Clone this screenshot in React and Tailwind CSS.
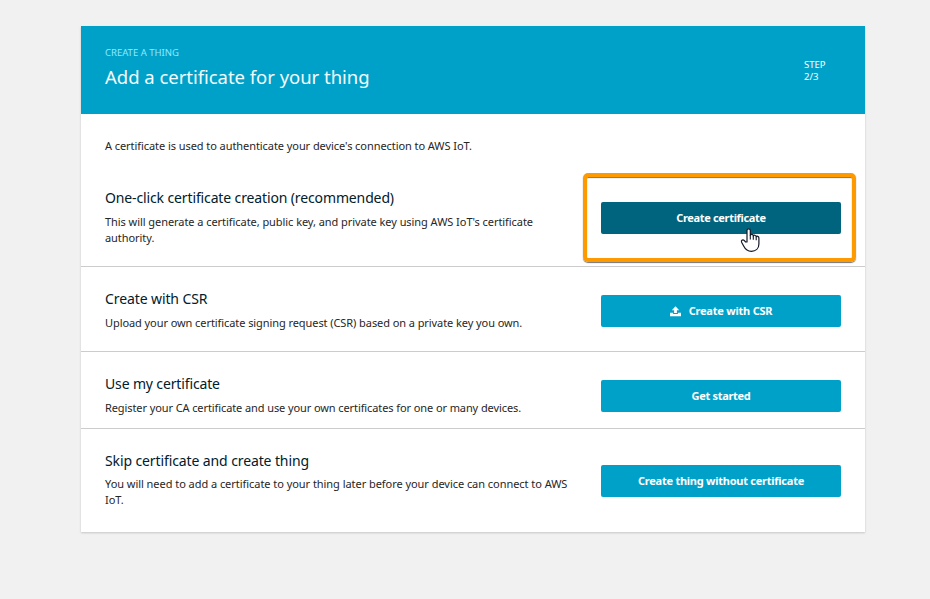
const uploadIcon = (
  <svg className="mr-2 h-[11px] w-[11px] shrink-0" viewBox="0 0 11 11" fill="#fff">
    <path d="M5.5 .3 9.2 4.2H6.9V7H4.1V4.2H1.8Z" />
    <path d="M0 6.8h3.1V8h4.8V6.8H11V10.2H0Z" />
  </svg>
);

const options = [
  {
    title: 'One-click certificate creation (recommended)',
    lines: [
      "This will generate a certificate, public key, and private key using AWS IoT's certificate",
      'authority.',
    ],
    action: 'Create certificate',
    row: 'h-[101px] border-b border-[#ccc]',
    heading: 'tracking-[-0.13px]',
    lead: 'mt-1.5 tracking-[-0.057px]',
    button: 'mt-9 bg-[#00647e] tracking-[-0.33px]',
    highlighted: true,
  },
  {
    title: 'Create with CSR',
    lines: ['Upload your own certificate signing request (CSR) based on a private key you own.'],
    action: 'Create with CSR',
    row: 'h-[85px] border-b border-[#ccc]',
    heading: 'tracking-[-0.1px]',
    lead: 'mt-1.5 tracking-[-0.075px]',
    button: 'mt-7 bg-[#00a1c9] tracking-[-0.22px]',
    icon: uploadIcon,
  },
  {
    title: 'Use my certificate',
    lines: ['Register your CA certificate and use your own certificates for one or many devices.'],
    action: 'Get started',
    row: 'h-[77px] border-b border-[#ccc]',
    heading: 'tracking-[-0.14px]',
    lead: 'mt-1.5 tracking-[-0.095px]',
    button: 'mt-7 bg-[#00a1c9] tracking-[-0.3px]',
  },
  {
    title: 'Skip certificate and create thing',
    lines: [
      'You will need to add a certificate to your thing later before your device can connect to AWS',
      'IoT.',
    ],
    action: 'Create thing without certificate',
    row: 'h-[103px]',
    heading: 'tracking-[-0.11px]',
    lead: 'mt-[5px] tracking-[-0.045px]',
    button: 'mt-9 bg-[#00a1c9] tracking-[-0.25px]',
  },
];

function Cursor() {
  return (
    <svg className="absolute left-[139px] top-[25px] h-[26px] w-5" viewBox="0 0 20 26">
      <path
        d="M7 15V3.6C7 1.2 10.3 1.2 10.3 3.6V8.2C10.8 7 13.3 7.2 13.3 8.9C13.8 7.8 16.2 8 16.2 9.7C16.8 8.8 18.9 9.2 18.9 11V17C18.9 21.6 15.6 24.3 11.4 24.3C7.4 24.3 5.2 22 3.8 19.2L1.6 15.2C.7 13.2 3 12.2 4.4 13.6L5.6 15Z"
        fill="#fff"
        stroke="#111827"
        strokeWidth="1.2"
        strokeLinejoin="round"
      />
      <path d="M10.3 8v4.6M13.3 8.8v4M16.2 9.6v3.6" stroke="#111827" strokeWidth="1.1" fill="none" />
    </svg>
  );
}

function Option({ option }) {
  return (
    <section className={`flex justify-between px-6 ${option.row}`}>
      <div className="pt-[22px]">
        <h2 className={`whitespace-nowrap text-[14px] leading-5 text-[#00202b] ${option.heading}`}>
          {option.title}
        </h2>
        <div className={`whitespace-nowrap text-[11px] leading-4 text-[#262626] ${option.lead}`}>
          {option.lines.map((line) => (
            <p key={line}>{line}</p>
          ))}
        </div>
      </div>
      <button
        className={`relative flex h-8 w-60 shrink-0 items-center justify-center whitespace-nowrap rounded-[2px] text-[11px] font-bold text-white ${option.button}`}
      >
        {option.icon}
        {option.action}
        {option.highlighted && (
          <>
            <span className="absolute -left-[18px] -top-[29px] h-[89px] w-[273px] rounded-[5px] border-4 border-[#ff9900] shadow-[0_1px_1px_rgba(0,0,0,0.55),inset_0_1px_1px_rgba(0,0,0,0.55)]" />
            <Cursor />
          </>
        )}
      </button>
    </section>
  );
}

export default function App() {
  return (
    <main className="h-[599px] w-[930px] bg-[#f1f1f1] pl-[81px] pt-[26px] font-['Noto_Sans','Open_Sans',sans-serif]">
      <div className="h-[506px] w-[784px] bg-white shadow-[0_1px_2px_rgba(0,0,0,0.18)]">
        <header className="flex h-[88px] justify-between bg-[#00a1c9] px-6">
          <div className="whitespace-nowrap pt-5">
            <p className="text-[9.5px] leading-[14px] text-[#8eeaff]">CREATE A THING</p>
            <h1 className="mt-1 text-[18.5px] leading-[26px] tracking-[-0.03px] text-[#f4fbfd]">
              Add a certificate for your thing
            </h1>
          </div>
          <div className="w-[37px] pt-[33px] text-[9.5px] leading-3 text-white">
            <p>STEP</p>
            <p>2/3</p>
          </div>
        </header>
        <p className="h-[52px] whitespace-nowrap px-6 pt-6 text-[11px] leading-4 tracking-[-0.065px] text-[#262626]">
          A certificate is used to authenticate your device's connection to AWS IoT.
        </p>
        {options.map((option) => (
          <Option key={option.title} option={option} />
        ))}
      </div>
    </main>
  );
}
